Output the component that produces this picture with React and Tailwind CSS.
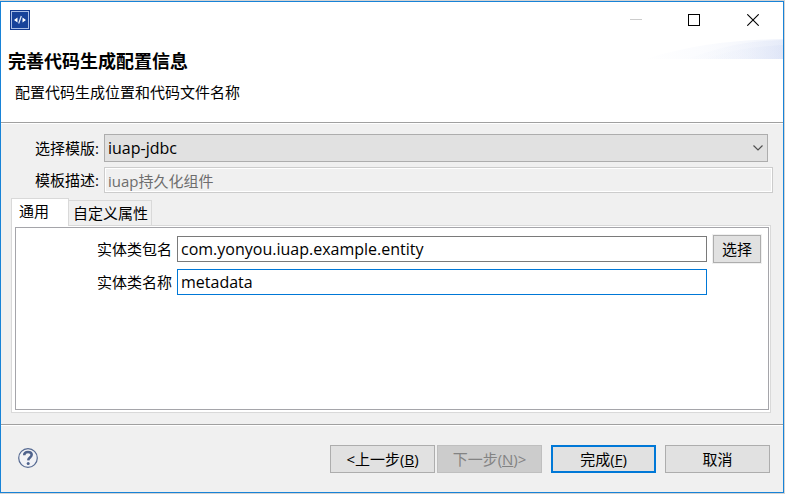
import { useState } from "react";

const footerButton =
  "h-7 w-[105px] border border-[#adadad] bg-[#e1e1e1] text-center hover:bg-[#e5f1fb] disabled:border-[#bfbfbf] disabled:bg-[#cccccc] disabled:text-[#838383]";

/* ---------------- Icons ---------------- */
function AppIcon() {
  return (
    <svg width="20" height="20" viewBox="0 0 20 20" aria-hidden="true">
      <rect width="20" height="20" fill="#12398f" />
      <rect x="1.5" y="1.5" width="17" height="17" fill="#17429a" stroke="#a9bde6" />
      <path d="M7.500 7.500 4 10l3.500 2.500zM12.500 7.500l3.500 2.500-3.500 2.500z" fill="#fff" />
      <path d="M11.300 6 8.700 13.500" stroke="#dfe8fa" strokeWidth="1.200" />
    </svg>
  );
}

function HelpIcon() {
  return (
    <svg width="20" height="20" viewBox="0 0 20 20" fill="none" aria-hidden="true">
      <circle cx="10" cy="10" r="9.300" fill="#f1f2f6" stroke="#566a92" strokeWidth="1.200" />
      <path
        d="M6.200 7.300C6.200 5 7.700 3.900 10 3.900c2.300 0 3.700 1.100 3.700 2.900 0 2.600-3.300 2.800-3.500 5.500"
        stroke="#4f638d"
        strokeWidth="2.500"
      />
      <circle cx="10.200" cy="15.500" r="1.500" fill="#4f638d" />
    </svg>
  );
}

function BannerCurve() {
  return (
    <svg width="138" height="20" viewBox="0 0 138 20" aria-hidden="true">
      <defs>
        <linearGradient id="curve" x1="0" x2="1" y1="0" y2="0">
          <stop offset="0" stopColor="#e3e9f8" stopOpacity="0" />
          <stop offset="0.4" stopColor="#e9eefa" stopOpacity="0.2" />
          <stop offset="1" stopColor="#d3dcf4" stopOpacity="0.35" />
        </linearGradient>
      </defs>
      <path d="M0 20C40 8 80 1 138 0v20z" fill="url(#curve)" />
      <path d="M40 20C75 9 95 2 138 1v19z" fill="url(#curve)" />
      <path d="M60 20C85 11 105 8 138 6v14z" fill="url(#curve)" />
    </svg>
  );
}

/* ---------------- Title bar ---------------- */
function TitleBar() {
  return (
    <div className="flex h-9 items-center justify-between pl-[9px]">
      <AppIcon />
      <div className="flex">
        <button type="button" disabled aria-label="最小化" className="flex h-9 w-[58px] items-center justify-center">
          <svg width="12" height="12" viewBox="0 0 12 12">
            <path d="M0 5.500h12" stroke="#cccccc" />
          </svg>
        </button>
        <button type="button" aria-label="最大化" className="flex h-9 w-[58px] items-center justify-center">
          <svg width="12" height="12" viewBox="0 0 12 12" fill="none">
            <rect x="0.5" y="0.5" width="11" height="11" stroke="#000" />
          </svg>
        </button>
        <button type="button" aria-label="关闭" className="flex h-9 w-[60px] items-center justify-center">
          <svg width="12" height="12" viewBox="0 0 12 12">
            <path d="M0.300 0.300l11.400 11.400M11.700 0.300L0.300 11.700" stroke="#000" strokeWidth="1.100" />
          </svg>
        </button>
      </div>
    </div>
  );
}

export default function App() {
  const [template, setTemplate] = useState("iuap-jdbc");
  const [tab, setTab] = useState("general");
  const [packageName, setPackageName] = useState("com.yonyou.iuap.example.entity");
  const [entityName, setEntityName] = useState("metadata");

  return (
    <div className="flex min-h-screen flex-col bg-[#d4d4d4] py-px pr-px font-['Open_Sans','Noto_Sans_CJK_SC',sans-serif] text-[15px] leading-5 text-black">
      <main className="flex flex-1 flex-col border border-[#1883d7] bg-[#f0f0f0]">
        {/* -------- Header -------- */}
        <header className="relative h-[122px] border-b border-white bg-white">
          <div className="h-full border-b border-[#a0a0a0]">
            <TitleBar />
            <div className="absolute top-[37px] right-0">
              <BannerCurve />
            </div>
            <h1 className="mt-2.5 pl-[7px] font-['Noto_Sans_CJK_SC',sans-serif] text-[18px] leading-6 font-bold">
              完善代码生成配置信息
            </h1>
            <p className="mt-2.5 pl-3.5">配置代码生成位置和代码文件名称</p>
          </div>
        </header>

        {/* -------- Template -------- */}
        <div className="grid grid-cols-[98px_1fr] items-center gap-[5px] pt-2.5 pr-2.5">
          <label htmlFor="template" className="text-right">
            选择模版:
          </label>
          <div className="relative mr-[5px]">
            <select
              id="template"
              value={template}
              onChange={(e) => setTemplate(e.target.value)}
              className="block h-7 w-full appearance-none border border-[#adadad] bg-[#e1e1e1] px-[3px] text-base outline-none"
            >
              <option value="iuap-jdbc">iuap-jdbc</option>
            </select>
            <svg
              width="10"
              height="6"
              viewBox="0 0 10 6"
              fill="none"
              className="pointer-events-none absolute top-[11px] right-[5px]"
            >
              <path d="M0.500 0.500L5 5l4.500-4.500" stroke="#505050" strokeWidth="1.200" />
            </svg>
          </div>

          <label htmlFor="description" className="text-right">
            模板描述:
          </label>
          <input
            id="description"
            disabled
            value="iuap持久化组件"
            className="h-[26px] w-full border border-[#cccccc] bg-[#f0f0f0] px-[3px] text-[#6d6d6d] inset-ring inset-ring-white"
          />
        </div>

        {/* -------- Tabs -------- */}
        <div className="flex flex-1 flex-col pt-[5px] pr-3 pb-[11px] pl-2.5">
          <div role="tablist" className="flex items-end">
            <button
              type="button"
              role="tab"
              aria-selected={tab === "general"}
              onClick={() => setTab("general")}
              className="z-10 -mb-px h-7 w-[58px] border border-b-0 border-[#d9d9d9] bg-white pb-1 pl-[7px] text-left"
            >
              通用
            </button>
            <button
              type="button"
              role="tab"
              aria-selected={tab === "custom"}
              onClick={() => setTab("custom")}
              className="h-[25px] w-[83px] border border-b-0 border-l-0 border-[#d9d9d9] bg-[#f0f0f0] pl-1 text-left"
            >
              自定义属性
            </button>
          </div>

          <div className="flex flex-1 flex-col border border-[#d9d9d9] bg-white pt-px pr-px pb-0.5 pl-[3px]">
            <div role="tabpanel" className="flex-1 border border-[#a5a5aa] pt-[7px] pr-[7px]">
              {tab === "general" && (
                <div className="grid grid-cols-[156px_1fr_49px] items-center gap-x-[5px] gap-y-1.5">
                  <label htmlFor="packageName" className="text-right">
                    实体类包名
                  </label>
                  <input
                    id="packageName"
                    value={packageName}
                    onChange={(e) => setPackageName(e.target.value)}
                    className="h-[26px] w-full border border-[#7a7a7a] bg-white px-[3px] text-base outline-none"
                  />
                  <button
                    type="button"
                    className="ml-px h-7 border border-[#adadad] bg-[#e1e1e1] text-center ring-1 ring-[#f0f0f0]"
                  >
                    选择
                  </button>

                  <label htmlFor="entityName" className="text-right">
                    实体类名称
                  </label>
                  <input
                    id="entityName"
                    value={entityName}
                    onChange={(e) => setEntityName(e.target.value)}
                    className="h-[26px] w-full border border-[#0078d7] bg-white px-[3px] text-base outline-none"
                  />
                </div>
              )}
            </div>
          </div>
        </div>

        {/* -------- Buttons -------- */}
        <footer className="border-t border-[#a0a0a0]">
          <div className="flex items-start border-t border-white pt-[19px] pr-[13px] pb-[19px] pl-[17px]">
            <button type="button" aria-label="帮助" className="mt-[3px] mr-auto">
              <HelpIcon />
            </button>
            <div className="flex gap-0.5">
              <button type="button" className={footerButton}>
                &lt;上一步(<u>B</u>)
              </button>
              <button type="button" disabled className={footerButton}>
                下一步(<u>N</u>)&gt;
              </button>
            </div>
            <button
              type="button"
              className="ml-[9px] h-7 w-[105px] border-2 border-[#0078d7] bg-[#e1e1e1] text-center hover:bg-[#e5f1fb]"
            >
              完成(<u>F</u>)
            </button>
            <button type="button" className={`${footerButton} ml-[9px]`}>
              取消
            </button>
          </div>
        </footer>
      </main>
    </div>
  );
}
